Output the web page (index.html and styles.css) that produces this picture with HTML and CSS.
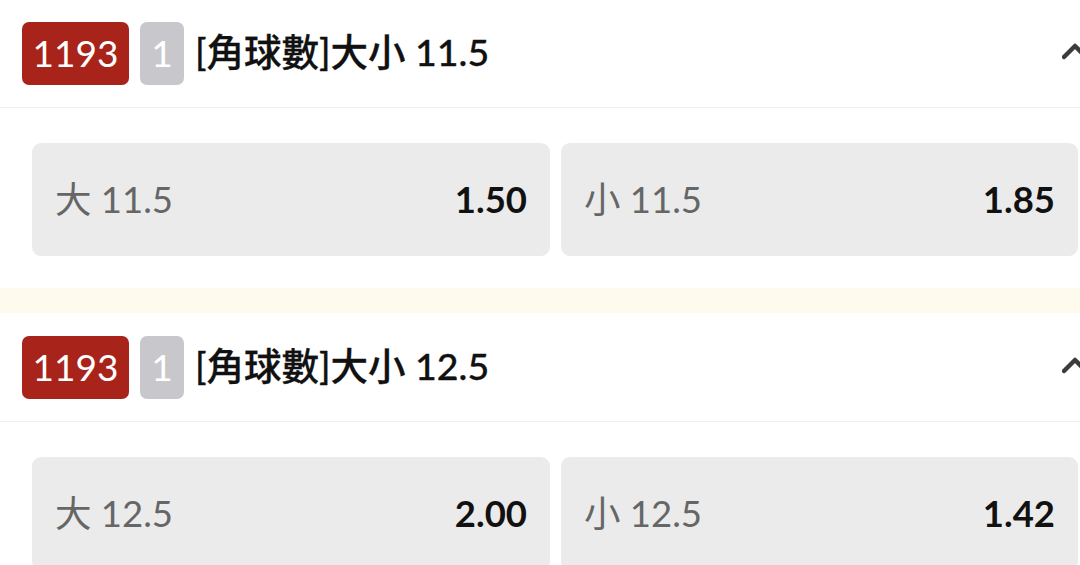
FILE: index.html
```html
<!DOCTYPE html>
<html lang="zh-Hant">
<head>
<meta charset="utf-8">
<link rel="stylesheet" href="styles.css">
</head>
<body>
<div class="list">
  <section class="market">
    <header class="market-head">
      <span class="badge badge-id">1193</span>
      <span class="badge badge-num">1</span>
      <h2 class="market-title">[角球數]大小 11.5</h2>
      <svg class="chevron" width="28" height="18" viewBox="0 0 28 18"><polyline points="2,15 13,4 24,15" fill="none" stroke="#3c3c3c" stroke-width="4.5" stroke-linecap="round" stroke-linejoin="round"/></svg>
    </header>
    <div class="odds-row">
      <button class="odd"><span class="odd-label">大 11.5</span><span class="odd-price">1.50</span></button>
      <button class="odd"><span class="odd-label">小 11.5</span><span class="odd-price">1.85</span></button>
    </div>
  </section>
  <section class="market">
    <header class="market-head">
      <span class="badge badge-id">1193</span>
      <span class="badge badge-num">1</span>
      <h2 class="market-title">[角球數]大小 12.5</h2>
      <svg class="chevron" width="28" height="18" viewBox="0 0 28 18"><polyline points="2,15 13,4 24,15" fill="none" stroke="#3c3c3c" stroke-width="4.5" stroke-linecap="round" stroke-linejoin="round"/></svg>
    </header>
    <div class="odds-row">
      <button class="odd"><span class="odd-label">大 12.5</span><span class="odd-price">2.00</span></button>
      <button class="odd"><span class="odd-label">小 12.5</span><span class="odd-price">1.42</span></button>
    </div>
  </section>
</div>
</body>
</html>
```
FILE: styles.css
```css
html, body {
  margin: 0;
  padding: 0;
  background: #fffaee;
  overflow: hidden;
  width: 1080px;
  height: 565px;
}
body {
  font-family: Lato, "Noto Sans CJK TC", sans-serif;
}
.list {
  width: 1110px;
  margin-top: -1px;
  display: flex;
  flex-direction: column;
  gap: 25px;
}
.market {
  background: #ffffff;
}
.market-head {
  display: flex;
  align-items: center;
  padding: 23px 0 22px 22px;
  border-bottom: 1px solid #efefef;
}
.badge {
  height: 63px;
  display: flex;
  align-items: center;
  justify-content: center;
  color: #ffffff;
  font-size: 37px;
  font-weight: 400;
  line-height: 1;
  padding-bottom: 3px;
  border-radius: 7px;
  box-sizing: border-box;
}
.badge-id {
  width: 107px;
  background: #a8231a;
  margin-right: 11px;
}
.badge-num {
  width: 44px;
  background: #c8c8cc;
  margin-right: 11px;
}
.market-title {
  margin: 0 0 3px 0;
  font-size: 37.5px;
  line-height: 1;
  font-weight: 500;
  -webkit-text-stroke: 0.3px #111111;
  color: #111111;
  flex: 1;
}
.chevron {
  margin-right: 20px;
  margin-top: -6px;
}
.odds-row {
  display: flex;
  gap: 11px;
  padding: 35px 32px 32px 32px;
}
.odd {
  flex: 1;
  height: 113px;
  border: none;
  border-radius: 9px;
  background: #ebebeb;
  display: flex;
  align-items: center;
  justify-content: space-between;
  padding: 0 23px 0 23px;
  font-family: Lato, "Noto Sans CJK TC", sans-serif;
  font-size: 36.5px;
  line-height: 1;
}
.odd:last-child {
  flex: 0 0 517px;
}
.odd-label {
  color: #666666;
}
.odd-price {
  color: #111111;
  font-weight: 700;
}
```
